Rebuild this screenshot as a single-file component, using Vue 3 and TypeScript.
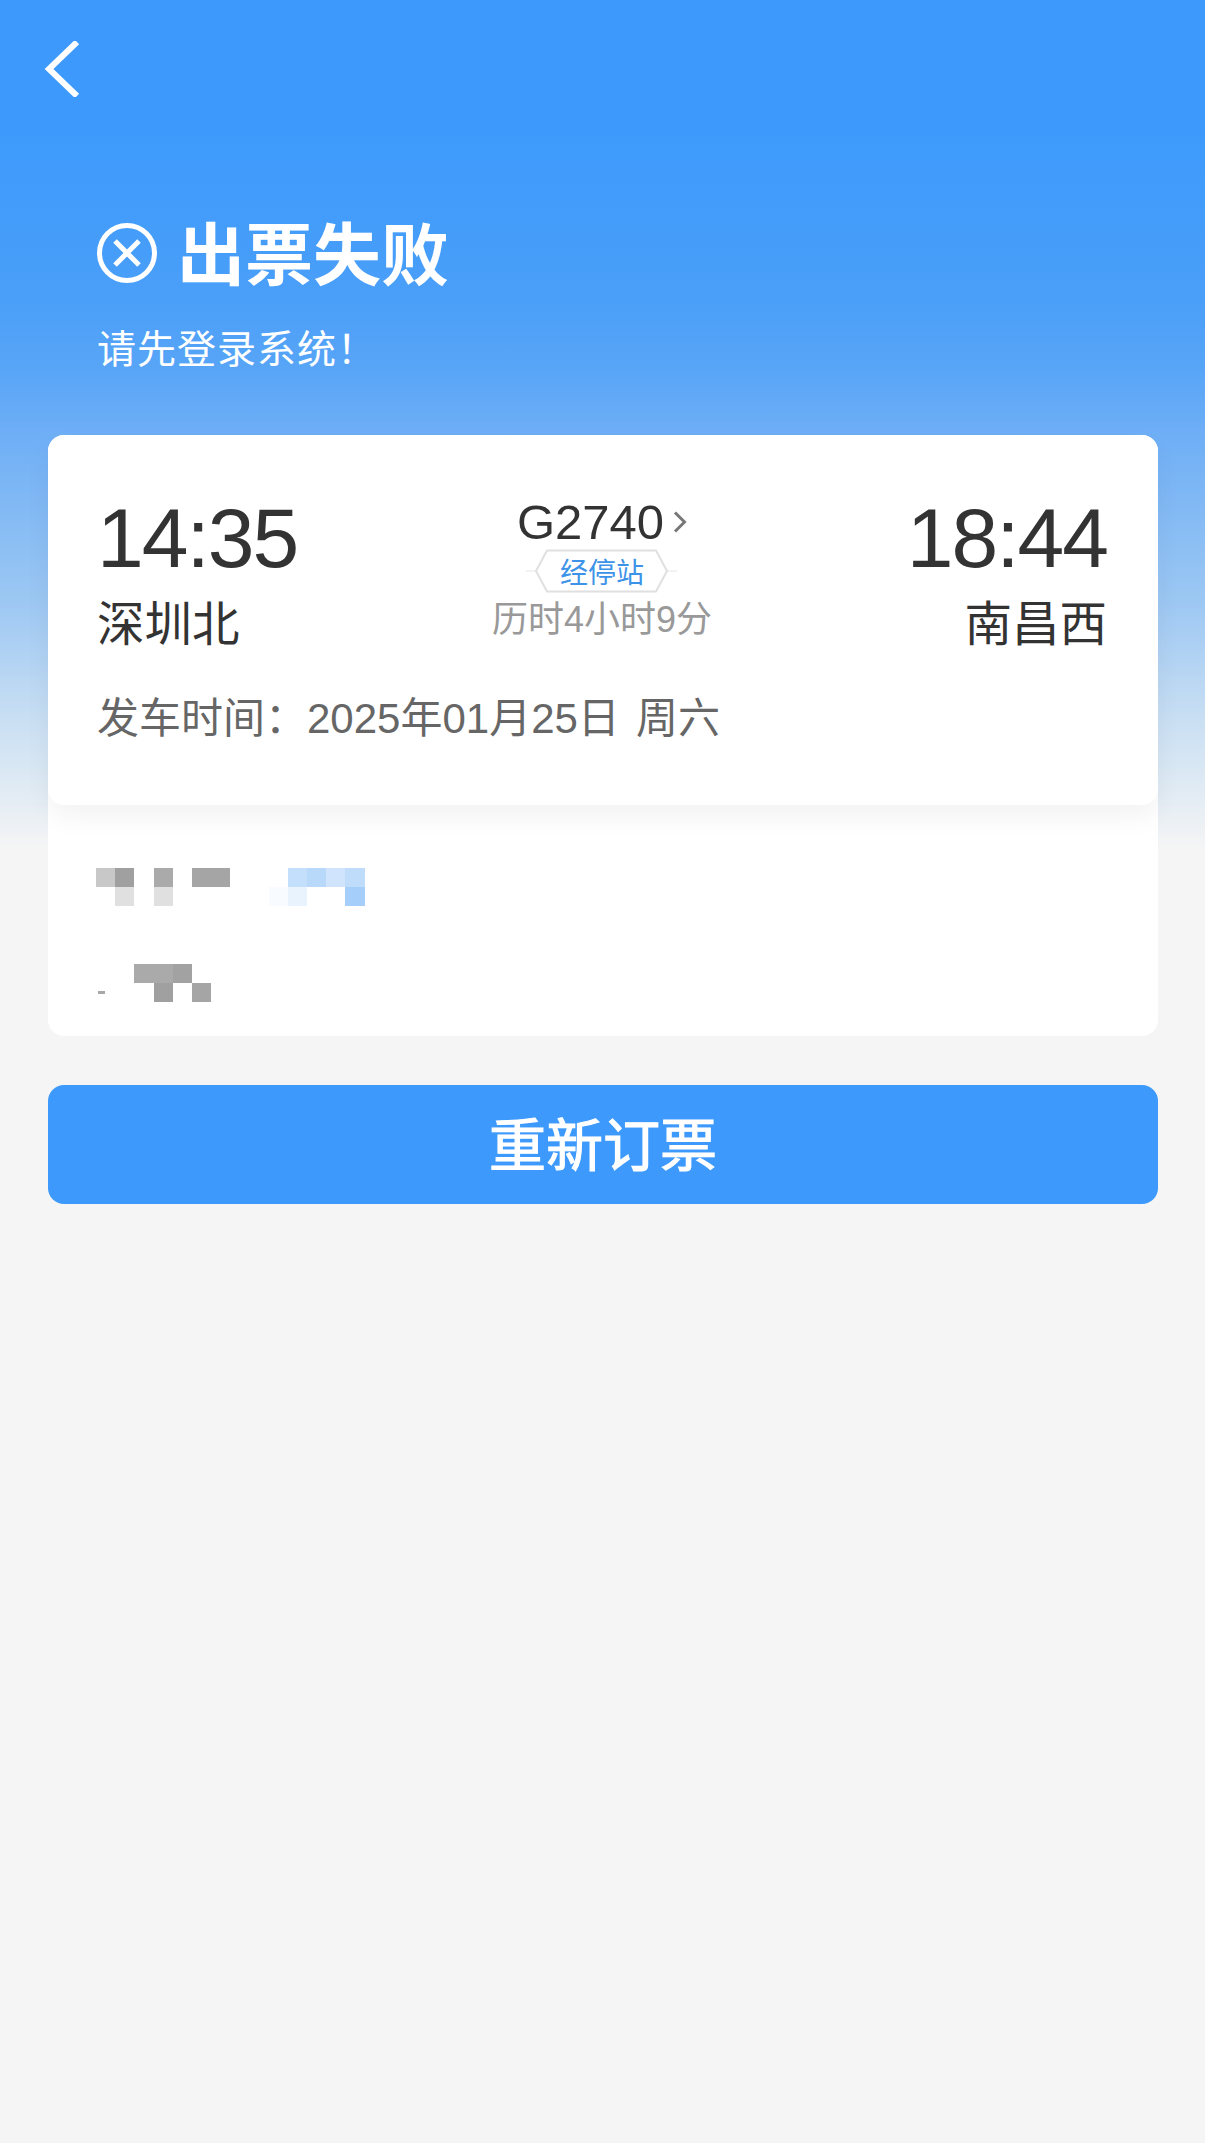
<template>
  <div class="page">
    <div class="nav">
      <svg class="back" width="40" height="56" viewBox="0 0 40 56">
        <path d="M37 1 L9 28 L37 55" fill="none" stroke="#fff" stroke-width="6" />
      </svg>
    </div>

    <div class="status">
      <div class="status-title">
        <svg width="60" height="60" viewBox="0 0 60 60">
          <circle cx="30" cy="30" r="27.5" fill="none" stroke="#fff" stroke-width="5" />
          <path d="M18 18 L42 42 M42 18 L18 42" stroke="#fff" stroke-width="5" />
        </svg>
        <span>出票失败</span>
      </div>
      <div class="status-msg">请先登录系统！</div>
    </div>

    <div class="panel">
      <div class="trip">
        <div class="trip-row">
          <div class="station">
            <div class="time">14:35</div>
            <div class="name">深圳北</div>
          </div>
          <div class="middle">
            <div class="train">
              <span>G2740</span>
              <svg width="14" height="22" viewBox="0 0 14 22">
                <path d="M2 1.5 L11.5 11 L2 20.5" fill="none" stroke="#777" stroke-width="3" />
              </svg>
            </div>
            <div class="stops">
              <svg width="167" height="44" viewBox="0 0 167 44">
                <path d="M8 22 H18 M149 22 H159" stroke="#eeeeee" stroke-width="1.5" />
                <path d="M29 1.5 H138 L149 22 L138 42.5 H29 L18 22 Z" fill="#fff" stroke="#e0e0e0" stroke-width="2" />
              </svg>
              <span>经停站</span>
            </div>
            <div class="duration">历时4小时9分</div>
          </div>
          <div class="station right">
            <div class="time">18:44</div>
            <div class="name">南昌西</div>
          </div>
        </div>
        <div class="depart">发车时间：2025年01月25日<span class="week">周六</span></div>
      </div>

      <div class="passenger">
        <div class="mosaic">
          <i v-for="(c, idx) in nameCells" :key="idx" :style="cellStyle(c)"></i>
        </div>
        <div class="mosaic second">
          <i v-for="(c, idx) in idCells" :key="idx" :style="cellStyle(c)"></i>
          <b class="speck"></b>
        </div>
      </div>
    </div>

    <button class="retry">重新订票</button>
  </div>
</template>

<script setup lang="ts">
interface Cell {
  col: number
  row: number
  span?: number
  color: string
}

// 打码的乘客信息，按 19.2px 的格子排
const nameCells: Cell[] = [
  { col: 1, row: 1, color: '#c8c8c8' },
  { col: 2, row: 1, color: '#a0a0a0' },
  { col: 4, row: 1, color: '#aaaaaa' },
  { col: 6, row: 1, span: 2, color: '#a5a5a5' },
  { col: 2, row: 2, color: '#e0e0e0' },
  { col: 4, row: 2, color: '#e0e0e0' },
  { col: 11, row: 1, color: '#c4dffc' },
  { col: 12, row: 1, color: '#b9d9fb' },
  { col: 13, row: 1, color: '#d0e5fd' },
  { col: 14, row: 1, color: '#c0dcfb' },
  { col: 10, row: 2, color: '#f8fbff' },
  { col: 11, row: 2, color: '#e8f3fe' },
  { col: 14, row: 2, color: '#a5cffa' },
]

const idCells: Cell[] = [
  { col: 3, row: 1, span: 2, color: '#aaaaaa' },
  { col: 5, row: 1, color: '#a2a2a2' },
  { col: 4, row: 2, color: '#a0a0a0' },
  { col: 6, row: 2, color: '#a5a5a5' },
]

const cellStyle = (c: Cell) => ({
  gridColumn: `${c.col} / span ${c.span ?? 1}`,
  gridRow: c.row,
  background: c.color,
})
</script>

<style>
html,
body {
  margin: 0;
  background: #f5f5f5;
}
</style>

<style scoped>
.page {
  box-sizing: border-box;
  width: 1205px;
  height: 2143px;
  overflow: hidden;
  padding: 0 47px 0 48px;
  background: linear-gradient(
    180deg,
    #3d9afc 0,
    #3d9afc 130px,
    #4a9ff8 300px,
    #58a5f7 370px,
    #6daef6 430px,
    #9cc7f3 600px,
    #c9dff3 720px,
    #f5f5f5 850px
  );
  font-family: "Liberation Sans", "Noto Sans CJK SC", sans-serif;
}

.nav {
  height: 140px;
  padding-top: 41px;
  box-sizing: border-box;
  margin-left: -8px;
}

.back {
  display: block;
}

.status {
  height: 295px;
  padding-left: 49px;
  box-sizing: border-box;
  padding-top: 75px;
  color: #fff;
}

.status-title {
  display: flex;
  align-items: center;
  gap: 20px;
  height: 70px;
  font-size: 68px;
  font-weight: 700;
}

.status-title svg {
  margin-top: 6px;
}

.status-msg {
  margin-top: 38px;
  font-size: 39px;
  line-height: 54px;
  letter-spacing: 1px;
}

.panel {
  height: 601px;
  border-radius: 16px;
  background: #fff;
}

.trip {
  box-sizing: border-box;
  height: 370px;
  padding: 60px 51px 0 49px;
  border-radius: 16px;
  background: #fff;
  box-shadow: 0 12px 26px rgba(0, 0, 0, 0.05);
}

.trip-row {
  display: flex;
  justify-content: space-between;
}

.station {
  width: 240px;
  color: #333;
}

.station.right {
  text-align: right;
}

.time {
  font-size: 84px;
  line-height: 86px;
  letter-spacing: -2px;
}

.name {
  margin-top: 12px;
  font-size: 47.5px;
  line-height: 64px;
}

.middle {
  display: flex;
  flex-direction: column;
  align-items: center;
  margin-top: -1px;
}

.train {
  display: flex;
  align-items: center;
  gap: 9px;
  height: 56px;
  font-size: 49px;
  color: #333;
}

.stops {
  position: relative;
  display: flex;
  align-items: center;
  justify-content: center;
  width: 167px;
  height: 44px;
  margin-top: -1px;
}

.stops svg {
  position: absolute;
  inset: 0;
}

.stops span {
  position: relative;
  font-size: 28px;
  color: #3d93e8;
}

.duration {
  margin-top: 3px;
  font-size: 36px;
  line-height: 48px;
  color: #999;
}

.depart {
  margin-top: 34px;
  font-size: 42px;
  line-height: 56px;
  color: #666;
}

.week {
  margin-left: 16px;
}

.passenger {
  padding: 63px 0 0 48px;
}

.mosaic {
  display: grid;
  grid-template-columns: repeat(15, 19.2px);
  grid-template-rows: repeat(2, 19px);
}

.mosaic.second {
  margin-top: 58px;
}

.speck {
  grid-column: 1;
  grid-row: 2;
  align-self: center;
  width: 7px;
  height: 3px;
  margin-left: 2px;
  background: #a8a8a8;
}

.retry {
  display: block;
  width: 100%;
  height: 119px;
  margin-top: 49px;
  padding: 0 0 8px;
  border: none;
  border-radius: 16px;
  background: #3d9afc;
  color: #fff;
  font-family: inherit;
  font-size: 57px;
  font-weight: 400;
  -webkit-text-stroke: 1.2px #fff;
}
</style>
